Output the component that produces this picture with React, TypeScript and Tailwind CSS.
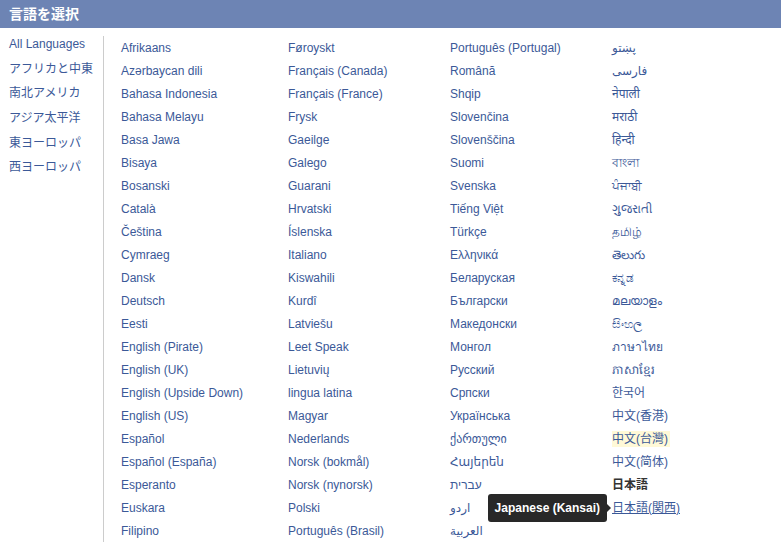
import React from "react";

const col1 = ["Afrikaans","Azərbaycan dili","Bahasa Indonesia","Bahasa Melayu","Basa Jawa","Bisaya","Bosanski","Català","Čeština","Cymraeg","Dansk","Deutsch","Eesti","English (Pirate)","English (UK)","English (Upside Down)","English (US)","Español","Español (España)","Esperanto","Euskara","Filipino"];
const col2 = ["Føroyskt","Français (Canada)","Français (France)","Frysk","Gaeilge","Galego","Guarani","Hrvatski","Íslenska","Italiano","Kiswahili","Kurdî","Latviešu","Leet Speak","Lietuvių","lingua latina","Magyar","Nederlands","Norsk (bokmål)","Norsk (nynorsk)","Polski","Português (Brasil)"];
const col3 = ["Português (Portugal)","Română","Shqip","Slovenčina","Slovenščina","Suomi","Svenska","Tiếng Việt","Türkçe","Ελληνικά","Беларуская","Български","Македонски","Монгол","Русский","Српски","Українська","ქართული","Հայերեն","עברית","اردو","العربية"];
const col4 = ["پښتو","فارسی","नेपाली","मराठी","हिन्दी","বাংলা","ਪੰਜਾਬੀ","ગુજરાતી","தமிழ்","తెలుగు","ಕನ್ನಡ","മലയാളം","සිංහල","ภาษาไทย","ភាសាខ្មែរ","한국어","中文(香港)","中文(台灣)","中文(简体)","日本語","日本語(関西)"];

const sidebar = ["All Languages","アフリカと中東","南北アメリカ","アジア太平洋","東ヨーロッパ","西ヨーロッパ"];

function Item({ label }: { label: string }) {
  if (label === "中文(台灣)") {
    return (
      <div className="h-[23px] flex items-center">
        <span className="bg-[#fff9d7] leading-[16px] pr-[2px]">{label}</span>
      </div>
    );
  }
  if (label === "日本語") {
    return (
      <div className="h-[23px] flex items-center font-bold text-[#333333]">{label}</div>
    );
  }
  if (label === "日本語(関西)") {
    return (
      <div className="h-[23px] flex items-center">
        <span className="relative underline">
          {label}
          <span className="absolute right-full mr-[5px] top-1/2 -translate-y-1/2 h-[28px] px-[7px] flex items-center whitespace-nowrap bg-[#282828] text-white font-bold rounded-[3px] [text-decoration:none]">
            Japanese (Kansai)
            <span className="absolute left-full top-1/2 -translate-y-1/2 w-0 h-0 border-y-[4px] border-y-transparent border-l-[4px] border-l-[#282828]" />
          </span>
        </span>
      </div>
    );
  }
  return <div className="h-[23px] flex items-center whitespace-nowrap">{label}</div>;
}

export default function App() {
  return (
    <div
      className="w-[781px] h-[553px] bg-white overflow-hidden text-[12px] text-[#3b5998]"
      style={{ fontFamily: '"Liberation Sans", "DejaVu Sans", "Noto Sans", "Noto Sans CJK JP", sans-serif' }}
    >
      <div className="h-[28px] bg-[#6d84b4] flex items-center pl-[9px] text-white font-bold text-[14px]">
        言語を選択
      </div>
      <div className="flex">
        <div className="w-[103px] pl-[9px] pt-[4px]">
          {sidebar.map((s) => (
            <div key={s} className="h-[24.6px] flex items-center whitespace-nowrap">{s}</div>
          ))}
        </div>
        <div className="mt-[8px] border-l border-[#cccccc] pl-[17px] flex">
          <div className="w-[167px]">{col1.map((l) => <Item key={l} label={l} />)}</div>
          <div className="w-[162px]">{col2.map((l) => <Item key={l} label={l} />)}</div>
          <div className="w-[162px]">{col3.map((l) => <Item key={l} label={l} />)}</div>
          <div className="w-[150px]">{col4.map((l) => <Item key={l} label={l} />)}</div>
        </div>
      </div>
    </div>
  );
}
